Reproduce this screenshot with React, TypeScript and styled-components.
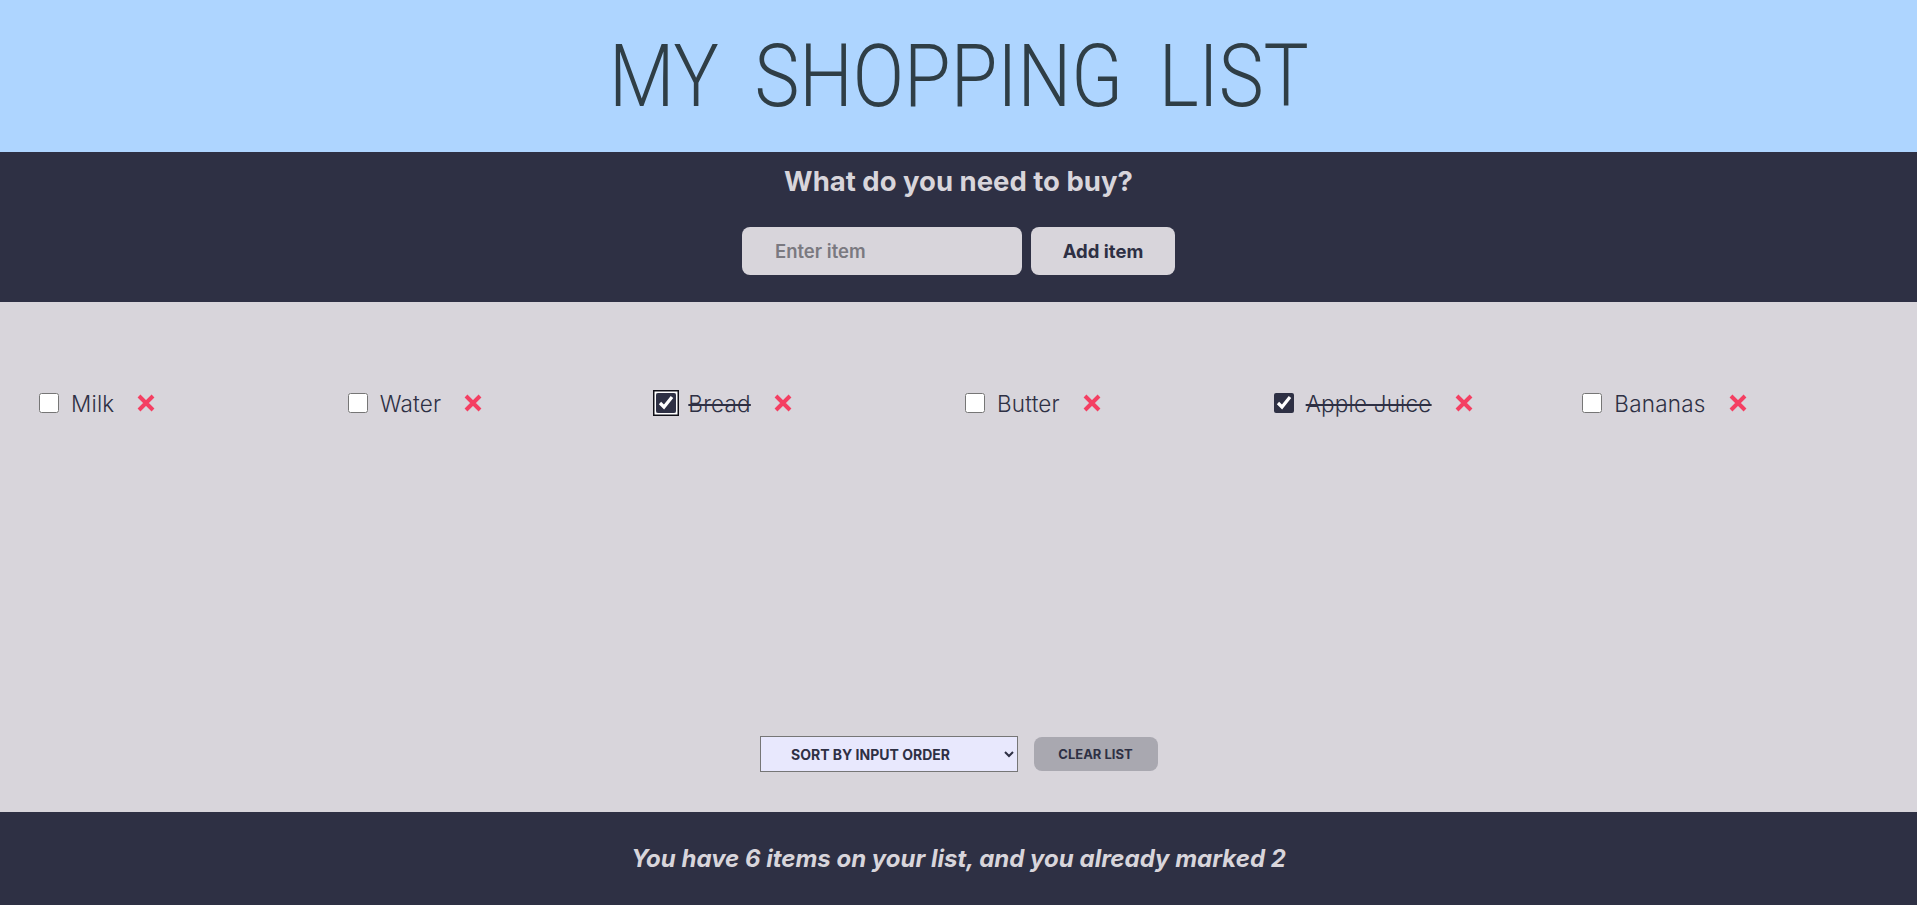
import React, { useState } from "react";
import styled, { createGlobalStyle } from "styled-components";

const GlobalStyle = createGlobalStyle`
  html, body { margin: 0; padding: 0; }
  body {
    font-family: "Inter", "Noto Sans", sans-serif;
    background: #d8d5db;
  }
  * { box-sizing: border-box; }
`;

const Page = styled.div`
  display: flex;
  flex-direction: column;
  min-height: 905px;
`;

const Header = styled.header`
  height: 152px;
  background: #aed5ff;
  display: flex;
  align-items: center;
  justify-content: center;
`;

const Title = styled.h1`
  margin: 0;
  font-family: "Roboto", "Liberation Sans", sans-serif;
  font-weight: 300;
  font-size: 88px;
  line-height: 1;
  word-spacing: 20px;
  color: #2f3e46;
  transform: scaleX(0.86);
  white-space: nowrap;
`;

const Nav = styled.section`
  background: #2e3044;
  height: 150px;
  padding-top: 11px;
  display: flex;
  flex-direction: column;
  align-items: center;
`;

const Question = styled.h2`
  margin: 0;
  font-size: 27.5px;
  line-height: 36px;
  font-weight: 700;
  color: #d8d5db;
`;

const Form = styled.form`
  display: flex;
  gap: 9px;
  margin-top: 28px;
`;

const ItemInput = styled.input`
  width: 280px;
  height: 48px;
  border: none;
  border-radius: 8px;
  background: #d8d5db;
  padding: 0 0 0 33px;
  font-family: inherit;
  font-size: 18.5px;
  font-weight: 600;
  color: #2e3044;
  outline: none;
  &::placeholder { color: #7a7980; }
`;

const AddButton = styled.button`
  width: 144px;
  height: 48px;
  border: none;
  border-radius: 8px;
  background: #d8d5db;
  font-family: inherit;
  font-size: 18.5px;
  font-weight: 700;
  color: #2e3044;
  cursor: pointer;
`;

const Main = styled.main`
  height: 510px;
  display: flex;
  flex-direction: column;
  padding: 86px 26px 40px 39px;
`;

const List = styled.ul`
  list-style: none;
  margin: 0;
  padding: 0;
  display: grid;
  grid-template-columns: repeat(6, 1fr);
`;

const Item = styled.li`
  display: flex;
  align-items: center;
  height: 30px;
`;

const Check = styled.input<{ $focused?: boolean }>`
  width: 20px;
  height: 20px;
  margin: 0;
  accent-color: #2e3044;
  border-radius: 3px;
  box-shadow: ${(p) =>
    p.$focused ? "0 0 0 1.5px #ffffff, 0 0 0 3px #101018" : "none"};
`;

const Label = styled.span<{ $done: boolean }>`
  margin-left: 12px;
  font-size: 22.5px;
  font-weight: 300;
  letter-spacing: 0.2px;
  color: #2e3044;
  text-decoration: ${(p) => (p.$done ? "line-through" : "none")};
  text-decoration-thickness: 2px;
`;

const Remove = styled.button`
  margin-left: 22px;
  width: 20px;
  height: 20px;
  padding: 0;
  border: none;
  background: none;
  display: flex;
  align-items: center;
  justify-content: center;
  cursor: pointer;
`;

const Controls = styled.div`
  margin-top: auto;
  display: flex;
  justify-content: center;
  align-items: center;
  gap: 16px;
  padding-right: 13px;
`;

const SortSelect = styled.select`
  width: 258px;
  height: 36px;
  padding: 0 24px 0 0;
  background: #e8e8fd;
  border: 1px solid #767676;
  border-radius: 0;
  font-family: "Inter", sans-serif;
  font-size: 14px;
  font-weight: 700;
  color: #2e3044;
  text-align: center;
  text-align-last: center;
  text-transform: uppercase;
`;

const ClearButton = styled.button`
  width: 124px;
  height: 34px;
  border: none;
  border-radius: 8px;
  background: #a9a8b0;
  font-family: "Inter", sans-serif;
  font-size: 13px;
  font-weight: 700;
  color: #2e3044;
  text-transform: uppercase;
  cursor: pointer;
`;

const Footer = styled.footer`
  height: 93px;
  background: #2e3044;
  display: flex;
  align-items: center;
  justify-content: center;
`;

const Stats = styled.em`
  font-size: 24px;
  font-weight: 700;
  font-style: italic;
  color: #d8d5db;
`;

const XIcon = () => (
  <svg width="20" height="20" viewBox="0 0 20 20" aria-hidden="true">
    <path
      d="M3 3 L17 17 M17 3 L3 17"
      stroke="#f43f62"
      strokeWidth="4"
      strokeLinecap="butt"
    />
  </svg>
);

type Entry = { id: number; name: string; done: boolean };

const initial: Entry[] = [
  { id: 1, name: "Milk", done: false },
  { id: 2, name: "Water", done: false },
  { id: 3, name: "Bread", done: true },
  { id: 4, name: "Butter", done: false },
  { id: 5, name: "Apple Juice", done: true },
  { id: 6, name: "Bananas", done: false },
];

export default function App() {
  const [items, setItems] = useState<Entry[]>(initial);
  const marked = items.filter((i) => i.done).length;

  return (
    <Page>
      <GlobalStyle />
      <Header>
        <Title>MY SHOPPING LIST</Title>
      </Header>
      <Nav>
        <Question>What do you need to buy?</Question>
        <Form onSubmit={(e) => e.preventDefault()}>
          <ItemInput placeholder="Enter item" />
          <AddButton type="submit">Add item</AddButton>
        </Form>
      </Nav>
      <Main>
        <List>
          {items.map((it) => (
            <Item key={it.id}>
              <Check
                type="checkbox"
                checked={it.done}
                $focused={it.id === 3}
                onChange={() =>
                  setItems((prev) =>
                    prev.map((p) => (p.id === it.id ? { ...p, done: !p.done } : p))
                  )
                }
              />
              <Label $done={it.done}>{it.name}</Label>
              <Remove
                type="button"
                onClick={() => setItems((prev) => prev.filter((p) => p.id !== it.id))}
              >
                <XIcon />
              </Remove>
            </Item>
          ))}
        </List>
        <Controls>
          <SortSelect defaultValue="input">
            <option value="input">Sort by input order</option>
            <option value="name">Sort by name</option>
            <option value="status">Sort by status</option>
          </SortSelect>
          <ClearButton type="button" onClick={() => setItems([])}>
            Clear list
          </ClearButton>
        </Controls>
      </Main>
      <Footer>
        <Stats>
          You have {items.length} items on your list, and you already marked {marked}
        </Stats>
      </Footer>
    </Page>
  );
}
